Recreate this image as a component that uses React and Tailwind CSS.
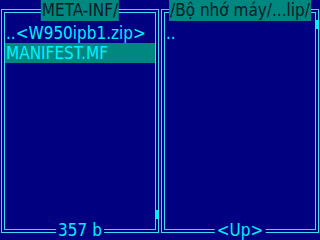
import React from "react";

const font = { fontFamily: '"Liberation Sans Narrow", "DejaVu Sans Condensed", "Liberation Sans", sans-serif' };

const Panel = ({ title, footer, rows, thumbTop }) => (
  <div className="relative w-[158px] h-[224px]">
    <div className="h-full border border-[#3ddcff] p-[2px]">
      <div className="h-full border border-[#3ddcff] pt-[10px]">
        {rows.map((r) => (
          <div
            key={r.label}
            className={`h-[20px] leading-[20px] pl-[1px] text-[17px] text-[#00f0ff] whitespace-nowrap ${
              r.selected ? "bg-[#00877f]" : ""
            }`}
          >
            {r.label}
          </div>
        ))}
      </div>
    </div>

    {/* title over the top border */}
    <div className="absolute top-[-9px] left-1/2 -translate-x-1/2 h-[21px] leading-[21px] px-[1px] bg-[#00877f] text-[17px] text-[#0a1a28] whitespace-nowrap">
      {title}
    </div>

    {/* footer over the bottom border */}
    <div className="absolute bottom-[-7px] left-1/2 -translate-x-1/2 h-[20px] leading-[20px] px-[2px] bg-[#000080] text-[17px] text-[#00f0ff] whitespace-nowrap">
      {footer}
    </div>

    {/* scroll thumb */}
    <div
      className={`absolute left-[155px] w-[3px] h-[9px] bg-[#00f0ff] ${thumbTop}`}
    />
  </div>
);

export default function App() {
  return (
    <div className="w-[320px] h-[240px] bg-[#000080] overflow-hidden" style={font}>
      <div className="flex gap-[2px] pl-[1px] pt-[9px]">
        <Panel
          title="META-INF/"
          footer="357 b"
          thumbTop="top-[201px]"
          rows={[
            { label: "..<W950ipb1.zip>" },
            { label: "MANIFEST.MF", selected: true },
          ]}
        />
        <Panel
          title="/Bộ nhớ máy/...lip/"
          footer="<Up>"
          thumbTop="top-[11px]"
          rows={[{ label: ".." }]}
        />
      </div>
    </div>
  );
}
